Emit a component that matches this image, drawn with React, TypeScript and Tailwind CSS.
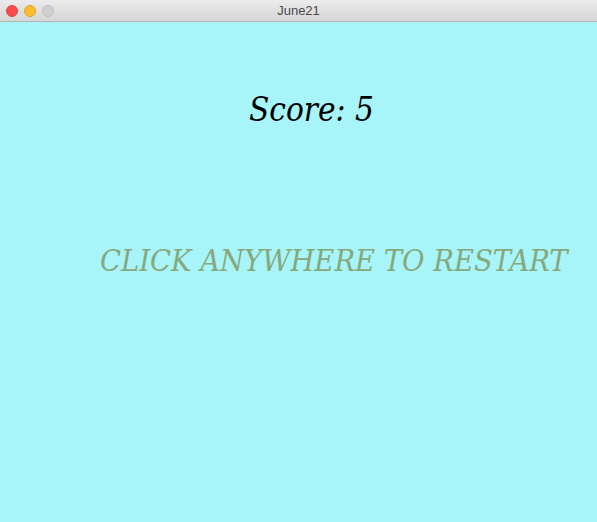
export default function App() {
  return (
    <div className="w-[597px] h-[522px] flex flex-col bg-[#a7f4f9] overflow-hidden">
      <div className="h-[22px] flex items-center relative bg-gradient-to-b from-[#ebebeb] to-[#d6d6d6] border-b border-[#b5b5b5]">
        <div className="flex gap-[6px] pl-[6px]">
          <div className="w-[12px] h-[12px] rounded-full bg-[#fc4b4b] border border-[#e0443e]" />
          <div className="w-[12px] h-[12px] rounded-full bg-[#fdbd2d] border border-[#dea123]" />
          <div className="w-[12px] h-[12px] rounded-full bg-[#cfcfcf] border border-[#bdbdbd]" />
        </div>
        <div className="absolute inset-0 flex items-center justify-center text-[13px] text-[#4a4a4a]" style={{ fontFamily: '"Liberation Sans", sans-serif' }}>
          June21
        </div>
      </div>
      <div className="flex-1 flex flex-col" style={{ fontFamily: '"DejaVu Serif Condensed", "DejaVu Serif", serif' }}>
        <div className="pt-[71px] pl-[249px] text-[33px] italic text-black leading-none">Score: 5</div>
        <div className="pt-[120px] pl-[100px] text-[30.5px] italic text-[#86a87c] leading-none whitespace-nowrap">CLICK ANYWHERE TO RESTART</div>
      </div>
    </div>
  );
}
